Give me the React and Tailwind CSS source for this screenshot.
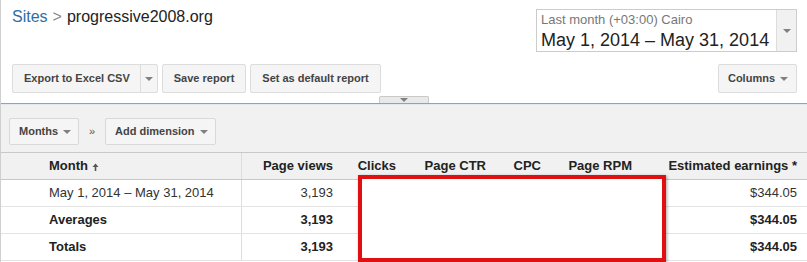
const Caret = () => (
  <span className="inline-block w-0 h-0 border-x-[4px] border-x-transparent border-t-[4px] border-t-[#808080]" />
);

const rows = [
  { label: "May 1, 2014 – May 31, 2014", views: "3,193", earnings: "$344.05", bold: false },
  { label: "Averages", views: "3,193", earnings: "$344.05", bold: true },
  { label: "Totals", views: "3,193", earnings: "$344.05", bold: true },
];

const App = () => {
  return (
    <div className="relative w-[807px] h-[262px] overflow-hidden bg-white border-l border-[#cfcfcf] font-['Liberation_Sans',Arial,sans-serif] text-[#333]">

      {/* Header area */}
      <div className="h-[96px] pl-[11px] pr-[10px]">

        <div className="flex justify-between items-start">
          <div className="pt-2 text-[16px] leading-[18px]">
            <span className="text-[#2e6da4]">Sites</span>
            <span className="text-[#888] mx-[5px]">&gt;</span>
            <span className="text-[#222]">progressive2008.org</span>
          </div>

          {/* Date range picker */}
          <div className="mt-[9px] h-[43px] w-[261px] flex border border-[#cccccc] bg-white">
            <div className="flex-1 pl-[4px]">
              <div className="pt-[2px] text-[13px] leading-[15px] text-[#777]">
                Last month (+03:00) Cairo
              </div>
              <div className="mt-[2px] text-[18px] leading-[22px] text-[#222] whitespace-nowrap">
                May 1, 2014 – May 31, 2014
              </div>
            </div>
            <div className="w-[20px] flex items-center justify-center bg-[#f1f1f1] border-l border-[#dddddd]">
              <Caret />
            </div>
          </div>
        </div>

        {/* Report buttons */}
        <div className="mt-[12px] flex justify-between">
          <div className="flex gap-[4px]">
            <div className="h-[29px] flex border border-[#dcdcdc] rounded-[2px] bg-[#f5f5f5] text-[11px] font-bold text-[#444]">
              <span className="pl-[11px] pr-[10px] flex items-center border-r border-[#dcdcdc]">
                Export to Excel CSV
              </span>
              <span className="w-[16px] flex items-center justify-center">
                <Caret />
              </span>
            </div>
            <div className="h-[29px] px-[11px] flex items-center border border-[#dcdcdc] rounded-[2px] bg-[#f5f5f5] text-[11px] font-bold text-[#444]">
              Save report
            </div>
            <div className="h-[29px] px-[11px] flex items-center border border-[#dcdcdc] rounded-[2px] bg-[#f5f5f5] text-[11px] font-bold text-[#444]">
              Set as default report
            </div>
          </div>

          <div className="h-[29px] pl-[9px] pr-[8px] gap-[5px] flex items-center border border-[#dcdcdc] rounded-[2px] bg-[#f5f5f5] text-[11px] font-bold text-[#444]">
            Columns
            <Caret />
          </div>
        </div>

      </div>

      {/* Splitter */}
      <div className="h-[8px] flex justify-center border-b border-[#8aa2c6]">
        <div className="w-[50px] h-[7px] flex items-center justify-center bg-[#e9e9e9] border-t border-x border-[#c9c9c9] rounded-t-[2px]">
          <Caret />
        </div>
      </div>

      {/* Dimension toolbar */}
      <div className="h-[48px] pl-[8px] pt-[13px] flex items-start bg-[#f1f1f1] border-t border-[#e4e9f0]">
        <div className="h-[27px] pl-[9px] pr-[7px] gap-[5px] flex items-center border border-[#d9d9d9] rounded-[2px] bg-[#f5f5f5] text-[11px] font-bold text-[#444]">
          Months
          <Caret />
        </div>
        <span className="w-[26px] h-[27px] flex items-center justify-center text-[11px] text-[#555]">»</span>
        <div className="h-[27px] pl-[9px] pr-[7px] gap-[5px] flex items-center border border-[#d9d9d9] rounded-[2px] bg-[#f5f5f5] text-[11px] font-bold text-[#444]">
          Add dimension
          <Caret />
        </div>
      </div>

      {/* Table */}
      <div className="text-[13px]">

        <div className="h-[28px] grid grid-cols-[241px_98px_63px_90px_55px_91px_1fr] leading-[26px] bg-[#f1f1f1] border-y border-[#c8c8c8] font-bold text-[#222]">
          <div className="pl-[48px] flex items-center gap-[4px] border-r border-[#dddddd]">
            Month
            <svg width="7" height="8" viewBox="0 0 7 8" className="mt-[2px]">
              <path d="M3.5 0.5 L6.5 4 L4.3 4 L4.3 8 L2.7 8 L2.7 4 L0.5 4 Z" fill="#555" />
            </svg>
          </div>
          <div className="text-right pr-[7px]">Page views</div>
          <div className="text-right pr-[7px]">Clicks</div>
          <div className="text-right pr-[7px]">Page CTR</div>
          <div className="text-right pr-[7px]">CPC</div>
          <div className="text-right pr-[7px]">Page RPM</div>
          <div className="text-right pr-[10px] whitespace-nowrap">Estimated earnings *</div>
        </div>

        {rows.map((row) => (
          <div
            key={row.label}
            className={`h-[27px] grid grid-cols-[241px_98px_63px_90px_55px_91px_1fr] leading-[26px] border-b border-[#e3e3e3] bg-white ${row.bold ? "font-bold text-[#222]" : "text-[#333]"}`}
          >
            <div className="pl-[48px] border-r border-[#dddddd]">{row.label}</div>
            <div className="text-right pr-[7px]">{row.views}</div>
            <div />
            <div />
            <div />
            <div />
            <div className="text-right pr-[10px]">{row.earnings}</div>
          </div>
        ))}

      </div>

      {/* Red highlight box over hidden columns */}
      <div className="absolute left-[357px] top-[175px] w-[308px] h-[87px] border-4 border-[#e01010] bg-white shadow-[1px_1px_3px_rgba(0,0,0,0.35)]" />

    </div>
  );
};

export default App;
